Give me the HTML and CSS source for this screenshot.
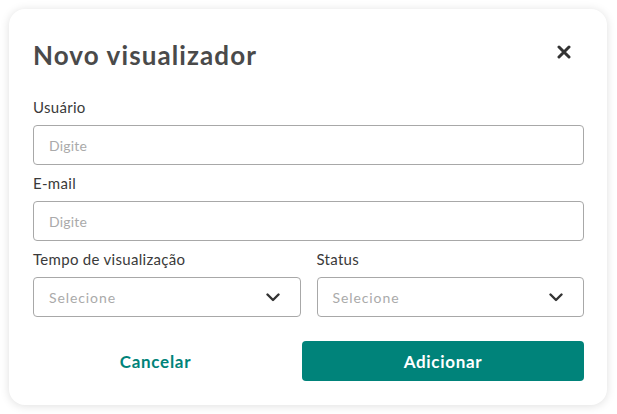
FILE: index.html
```html
<!DOCTYPE html>
<html lang="pt-BR">
<head>
<meta charset="utf-8">
<title>Novo visualizador</title>
<link rel="stylesheet" href="styles.css">
</head>
<body>
<div class="modal">
  <div class="modal-header">
    <h1 class="modal-title">Novo visualizador</h1>
    <button class="close-btn" type="button" aria-label="Fechar">
      <svg width="14" height="14" viewBox="0 0 14 14"><path d="M2 2 L12 12 M12 2 L2 12" stroke="#333" stroke-width="3" stroke-linecap="round" fill="none"/></svg>
    </button>
  </div>
  <div class="field">
    <label class="label">Usuário</label>
    <input class="input" type="text" placeholder="Digite">
  </div>
  <div class="field">
    <label class="label">E-mail</label>
    <input class="input" type="text" placeholder="Digite">
  </div>
  <div class="row">
    <div class="field">
      <label class="label">Tempo de visualização</label>
      <div class="select"><span class="placeholder">Selecione</span>
        <svg class="chev" width="14" height="9" viewBox="0 0 14 9"><path d="M1.5 1.5 L7 7 L12.5 1.5" stroke="#333" stroke-width="2.4" stroke-linecap="round" stroke-linejoin="round" fill="none"/></svg>
      </div>
    </div>
    <div class="field">
      <label class="label">Status</label>
      <div class="select"><span class="placeholder">Selecione</span>
        <svg class="chev" width="14" height="9" viewBox="0 0 14 9"><path d="M1.5 1.5 L7 7 L12.5 1.5" stroke="#333" stroke-width="2.4" stroke-linecap="round" stroke-linejoin="round" fill="none"/></svg>
      </div>
    </div>
  </div>
  <div class="footer">
    <button class="btn btn-link" type="button">Cancelar</button>
    <button class="btn btn-primary" type="button">Adicionar</button>
  </div>
</div>
</body>
</html>
```
FILE: styles.css
```css
* { box-sizing: border-box; }
html, body { margin: 0; padding: 0; background: #ffffff; }
body {
  padding: 9px;
  font-family: "Lato", "Open Sans", sans-serif;
  color: #333;
}
.modal {
  width: 598px;
  height: 396px;
  background: #fff;
  border-radius: 16px;
  box-shadow: 0 1px 10px rgba(0,0,0,0.13);
  padding: 24px 23px 24px 24px;
}
.modal-header {
  display: flex;
  justify-content: space-between;
  align-items: flex-start;
  padding-top: 6px;
  margin-bottom: 26px;
  height: 38px;
}
.modal-title {
  margin: 0;
  font-size: 26px;
  line-height: 32px;
  font-weight: 700;
  color: #4a4a4a;
  letter-spacing: 1.1px;
}
.close-btn {
  width: 40px;
  height: 26px;
  border: 0;
  background: none;
  padding: 0;
  display: flex;
  align-items: center;
  justify-content: center;
}
.field { margin-bottom: 8px; }
.label {
  display: block;
  font-size: 15px;
  line-height: 20px;
  color: #3a3a3a;
  margin-bottom: 8px;
  letter-spacing: 0.3px;
}
.input, .select {
  width: 100%;
  height: 40px;
  border: 1px solid #a8a8a8;
  border-radius: 4px;
  padding: 0 15px;
  font-family: inherit;
  font-size: 14px;
  color: #333;
  background: #fff;
  outline: none;
  display: block;
}
.input::placeholder { color: #aaaaaa; letter-spacing: 0.2px; }
.select {
  display: flex;
  align-items: center;
  justify-content: space-between;
  padding-right: 20px;
}
.placeholder { color: #aaaaaa; letter-spacing: 0.9px; }
.row {
  display: grid;
  grid-template-columns: 1fr 1fr;
  gap: 16px;
}
.row .field { margin-bottom: 0; }
.footer {
  display: grid;
  grid-template-columns: 1fr 282px;
  gap: 24px;
  margin-top: 24px;
}
.btn {
  height: 40px;
  border: 0;
  border-radius: 4px;
  font-family: inherit;
  font-size: 17px;
  font-weight: 700;
  letter-spacing: 0.7px;
  cursor: pointer;
}
.btn-link { background: none; color: #00837a; }
.btn-primary { background: #00837a; color: #fff; }
```
